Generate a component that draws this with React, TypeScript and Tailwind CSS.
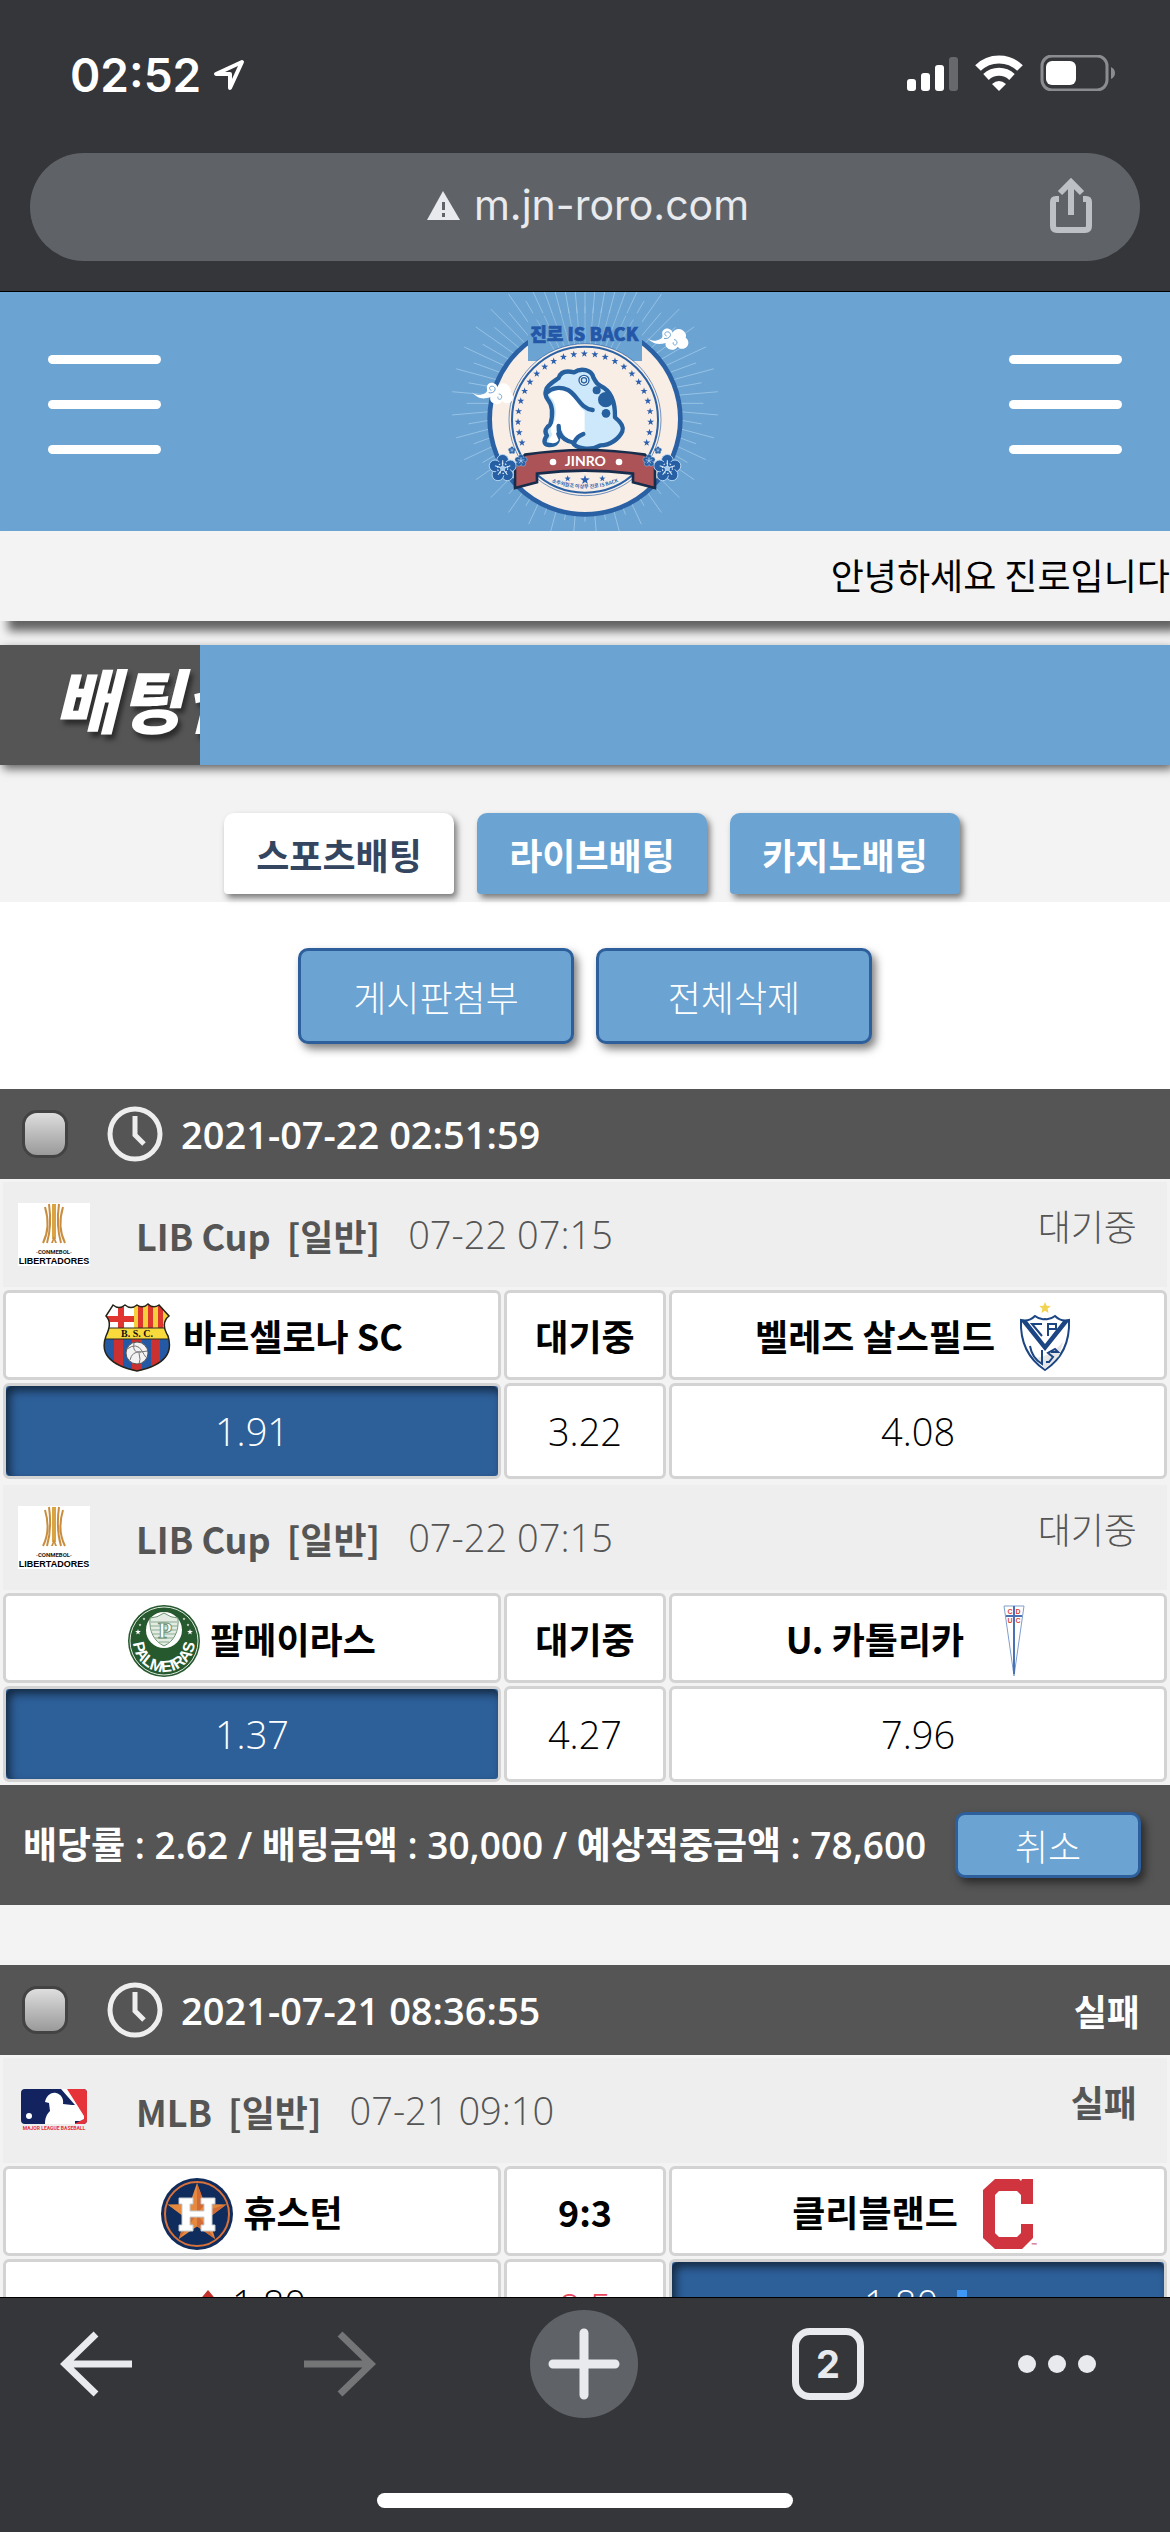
import { useState, type ReactNode } from 'react'

type TeamInfo = { name: string; logo: ReactNode }
type Odd = { value: string; selected?: boolean; trend?: 'up' | 'down'; line?: boolean }
type MatchInfo = {
  id: number
  league: string
  leagueLogo: ReactNode
  time: string
  status: string
  strong?: boolean
  home: TeamInfo
  away: TeamInfo
  score: string
  odds: Odd[]
}

function starPoints(cx: number, cy: number, r: number, inner = 0.4) {
  return Array.from({ length: 10 }, (_, i) => {
    const a = (Math.PI / 5) * i - Math.PI / 2
    const d = i % 2 ? r * inner : r
    return `${(cx + d * Math.cos(a)).toFixed(1)},${(cy + d * Math.sin(a)).toFixed(1)}`
  }).join(' ')
}

function Flower({ x, y, r }: { x: number; y: number; r: number }) {
  const petals = [0, 1, 2, 3, 4].map((i) => {
    const a = (Math.PI * 2 * i) / 5 - Math.PI / 2
    return [x + Math.cos(a) * r * 0.6, y + Math.sin(a) * r * 0.6]
  })
  return (
    <g>
      {petals.map(([px, py], i) => (
        <circle key={i} cx={px} cy={py} r={r * 0.44} fill="#275fa5" stroke="#b9d9f2" strokeWidth={r * 0.07} />
      ))}
      <circle cx={x} cy={y} r={r * 0.55} fill="#275fa5" />
      {petals.map(([px, py], i) => (
        <path key={i} d={`M${x} ${y}L${px} ${py}`} stroke="#dcecf8" strokeWidth={r * 0.08} />
      ))}
      <circle cx={x} cy={y} r={r * 0.38} fill="none" stroke="#dcecf8" strokeWidth={r * 0.08} strokeDasharray={`${r * 0.12} ${r * 0.12}`} />
      <circle cx={x} cy={y} r={r * 0.2} fill="#a9cdeb" />
    </g>
  )
}

function Cloud({ x, y }: { x: number; y: number }) {
  return (
    <g transform={`translate(${x} ${y})`}>
      <path
        d="M0 31c12 11 26 10 39 3 6-3 7-8 6-13C42 7 54 0 64 3c7 2 11 7 12 12 6-12 20-14 30-7 9 6 12 15 9 22 10 7 11 21 2 29-10 8-22 4-26-2-5 10-19 12-28 6-7-4-10-10-8-17-13 4-30 5-39-2-8-5-13-9-16-13z"
        fill="#fff"
      />
      <path d="M58 25c-6-1-8-10-1-12s14 3 12 11c-2 7-11 10-19 8M78 44c-3 6 5 11 9 6s2-14-7-14" fill="none" stroke="#6ba3d2" strokeWidth="3" />
    </g>
  )
}

function JinroLogo() {
  const rays = Array.from({ length: 72 }, (_, i) => (Math.PI * 2 * i) / 72)
  const stars = Array.from({ length: 25 }, (_, i) => ((-200 + i * (220 / 24)) * Math.PI) / 180)
  return (
    <svg viewBox="-15 6 900 717" className="h-[239px] w-[300px]" role="img" aria-label="진로 IS BACK">
      {rays.map((a, i) => {
        const d = i % 2 ? 400 : 355
        return (
          <path
            key={i}
            d={`M${435 + Math.cos(a) * 150} ${340 + Math.sin(a) * 150}L${435 + Math.cos(a) * d} ${340 + Math.sin(a) * d}`}
            stroke="#a5cdeb"
            strokeWidth="3"
            opacity="0.75"
          />
        )
      })}
      <circle cx="435" cy="387" r="286" fill="#f8eee6" stroke="#2a60a4" strokeWidth="14" />
      <path d="M264 213V70h342v143z" fill="#6ba3d2" />
      {rays.slice(48, 61).map((a) => (
        <path
          key={a}
          d={`M${435 + Math.cos(a) * 150} ${340 + Math.sin(a) * 150}L${435 + Math.cos(a) * 290} ${340 + Math.sin(a) * 290}`}
          stroke="#a5cdeb"
          strokeWidth="3"
          opacity="0.6"
        />
      ))}
      <circle cx="435" cy="389" r="228" fill="#f8eee6" stroke="#2a60a4" strokeWidth="2" />
      <circle cx="435" cy="389" r="219" fill="none" stroke="#2a60a4" strokeWidth="6" />
      <text
        x="433"
        y="152"
        textAnchor="middle"
        className="font-['Noto_Sans_CJK_KR',sans-serif] text-[54px] font-black"
        fill="#2457a8"
        stroke="#2457a8"
        strokeWidth="2"
      >
        진로 IS BACK
      </text>
      {stars.map((a) => (
        <polygon key={a} points={starPoints(433 + Math.cos(a) * 199, 390 + Math.sin(a) * 199, 11)} fill="#2c5fae" />
      ))}
      <g stroke="#27609f" strokeWidth="13" strokeLinejoin="round" strokeLinecap="round">
        <path
          d="M318 300c2-14 24-26 38-36 6-20 26-22 46-17 22-14 52-8 58 15 7 12 8 20 22 26 30 14 44 44 43 94 20 16 28 28 22 42-10 22-36 42-66 42-30 18-74 10-84-10-18-2-30-10-38-28l-6 6c6 20-6 32-26 31-18-1-16-16-6-28-10-14-2-26 10-33 10-36 4-62-8-76-6-8-8-18-5-28z"
          fill="#cde8fa"
        />
        <path
          d="M328 312c16-14 36-16 56-6 26 18 30 44 50 58v60c-14 6-24 14-32 28-18-4-30-14-36-32l-16-12c-6 20 0 28 6 42-8 14-28 10-30 4 0-8 8-12 11-22-8-10-6-22 4-32 12-30 6-60-4-72-6-6-9-10-9-16z"
          fill="#fff"
          stroke="none"
        />
        <path d="M320 308c16-16 42-18 64-8 28 14 34 54 74 60M360 432c-4-10-4-14-4-24M402 458c8-16 14-20 28-26" fill="none" />
      </g>
      <circle cx="432" cy="271" r="15" fill="#fff" stroke="#27609f" strokeWidth="4" />
      <circle cx="432" cy="271" r="8" fill="#cde8fa" stroke="#27609f" strokeWidth="4" />
      <circle cx="497" cy="329" r="23" fill="#27609f" />
      <circle cx="470" cy="301" r="12" fill="#27609f" />
      <circle cx="498" cy="370" r="13" fill="#27609f" />
      <Cloud x={622} y={113} />
      <Cloud x={96} y={276} />
      <path d="M225 530l30-36q180-28 360 0l30 36v64l-66-17v-26q-145-18-288 0v26l-66 17z" fill="#ab5356" stroke="#182c4c" strokeWidth="8" />
      <circle cx="339" cy="516" r="10" fill="#fff" />
      <circle cx="537" cy="516" r="10" fill="#fff" />
      <text x="436" y="528" textAnchor="middle" className="font-['Lato',sans-serif] text-[42px] font-bold" fill="#fff">
        JINRO
      </text>
      <polygon points={starPoints(383, 566, 10)} fill="#2c5fae" />
      <polygon points={starPoints(435, 570, 15)} fill="#2c5fae" />
      <polygon points={starPoints(487, 566, 10)} fill="#2c5fae" />
      <path id="motto" d="M325 572q108 46 220 0" fill="none" />
      <text className="font-['Noto_Sans_CJK_KR',sans-serif] text-[15px] font-bold" fill="#2c5fae">
        <textPath href="#motto" startOffset="50%" textAnchor="middle">
          소주의원조 이상무 진로 IS BACK
        </textPath>
      </text>
      <Flower x={188} y={535} r={40} />
      <Flower x={682} y={535} r={40} />
      <Flower x={243} y={512} r={18} />
      <Flower x={627} y={512} r={18} />
      <Flower x={216} y={481} r={11} />
      <Flower x={654} y={481} r={11} />
    </svg>
  )
}

function LibertadoresLogo() {
  return (
    <svg viewBox="0 0 72 63" className="h-[63px] w-[72px]" role="img" aria-label="CONMEBOL Libertadores">
      <path d="M0 0h72v63H0z" fill="#fff" />
      <path d="M34 1h4v35h-4z" fill="#d9a441" />
      <path d="M31 1q3 22-2 39M41 1q-3 22 2 39M27 4q6 20-2 36M45 4q-6 20 2 36" fill="none" stroke="#c98d40" strokeWidth="2" />
      <path d="M36 33l-3 7h2l1-3 1 3h2z" fill="#c98d40" />
      <text x="36" y="51" textAnchor="middle" className="font-['Roboto',sans-serif] text-[6px] font-bold" fill="#222">
        ·CONMEBOL·
      </text>
      <text x="36" y="61" textAnchor="middle" className="font-['Liberation_Sans',sans-serif] text-[9px] font-bold" fill="#000">
        LIBERTADORES
      </text>
    </svg>
  )
}

function MlbLogo() {
  return (
    <svg viewBox="0 0 72 48" className="h-12 w-[72px]" role="img" aria-label="Major League Baseball">
      <rect x="3" y="2" width="66" height="35" rx="4" fill="#12235f" />
      <path d="M48 2h17q4 0 4 4v27q0 4-4 4h-9l10-5z" fill="#e6333a" />
      <path d="M43 2h6l17 27v3l-4 2h-5v3H27c0-5 1-9 5-13l-1-8-4-1c1-5 5-10 11-9 5 1 8 6 7 11l9 1h3z" fill="#fff" />
      <circle cx="11" cy="29" r="3" fill="#fff" />
      <text x="36" y="43" textAnchor="middle" className="font-['Roboto',sans-serif] text-[5px] font-bold" fill="#e6333a">
        MAJOR LEAGUE BASEBALL
      </text>
    </svg>
  )
}

function BarcelonaCrest() {
  return (
    <svg viewBox="0 0 72 72" className="size-[72px]" role="img" aria-label="바르셀로나 SC">
      <defs>
        <clipPath id="bsc">
          <path d="M12 3q6 5 12 0q6 5 12 0h0q6 4 11-1q5 5 11 1l10 11c-5 4-7 10-1 20 5 16-2 29-31 35C7 63-1 50 5 34c5-10 4-16 0-20z" />
        </clipPath>
      </defs>
      <g clipPath="url(#bsc)">
        <path d="M0 0h36v26H0z" fill="#fff" />
        <path d="M0 14h36v6H0zM17 0h6v26h-6z" fill="#e1362f" />
        <path d="M33 0h39v26H33z" fill="#f6cf3d" />
        <path d="M37 0h5v26h-5zM47 0h5v26h-5zM57 0h5v26h-5zM67 0h5v26h-5z" fill="#dc362d" />
        <path d="M0 37h72v35H0z" fill="#2459a5" />
        <path d="M13 37h9v35h-9zM31 37h10v35H31zM50 37h9v35h-9z" fill="#cb3130" />
        <path d="M0 26h72v11H0z" fill="#f8da3c" stroke="#2a2a22" />
      </g>
      <path
        d="M12 3q6 5 12 0q6 5 12 0h0q6 4 11-1q5 5 11 1l10 11c-5 4-7 10-1 20 5 16-2 29-31 35C7 63-1 50 5 34c5-10 4-16 0-20z"
        fill="none"
        stroke="#252419"
        strokeWidth="1.5"
      />
      <text x="36" y="35" textAnchor="middle" className="font-['Liberation_Serif',serif] text-[10px] font-bold" fill="#111">
        B. S. C.
      </text>
      <circle cx="36" cy="51" r="11" fill="#f3f3f3" stroke="#555" />
      <path d="M26 47q10-7 15 2t5 6M33 41q-2 10 6 9l8-1M29 58q2-9 11-8M38 62q2-4 0-11" fill="none" stroke="#777" />
    </svg>
  )
}

function VelezCrest() {
  return (
    <svg viewBox="0 0 72 72" className="size-[72px]" role="img" aria-label="벨레즈 살스필드">
      <polygon points={starPoints(36, 6, 6, 0.45)} fill="#f3d352" />
      <path d="M12 18q8 2 14-4q5 4 10 3q5 1 10-3q6 6 14 4c1 22-6 38-24 50C18 56 11 40 12 18z" fill="#fff" stroke="#1c4583" strokeWidth="2" />
      <path d="M28 56q14-2 26-16l-4 14-14 13z" fill="#e5e6e8" />
      <path d="M12 19h6l18 23 18-23h6L36 49z" fill="#1c4583" />
      <path d="M33 22H23l10 12M39 34V22h8v5h-7M21 44q2 12 12 18V48M42 50h7l-3-3-7 4 5 4-4 5h-3" fill="none" stroke="#1c4583" strokeWidth="2" />
    </svg>
  )
}

function PalmeirasCrest() {
  return (
    <svg viewBox="0 0 72 72" className="size-[72px]" role="img" aria-label="팔메이라스">
      <circle cx="36" cy="36" r="36" fill="#27592f" />
      <circle cx="36" cy="36" r="34" fill="none" stroke="#dce8de" />
      <circle cx="36" cy="25" r="18" fill="#fff" />
      <path d="M22 13q7 0 14-5 7 5 14 5c1 14-4 23-14 28-10-5-15-14-14-28z" fill="#e3ece3" stroke="#6c9272" />
      <path d="M23 17h26M23 21h26M24 25h24M25 29h22M27 33h18M31 37h10" stroke="#8cab90" />
      <text x="37" y="33" textAnchor="middle" className="font-['Liberation_Serif',serif] text-[23px]" fill="#fff" stroke="#6c9272">
        P
      </text>
      {[
        [10, 27, 3],
        [12, 20, 1.5],
        [16, 14, 1.5],
        [62, 27, 3],
        [60, 20, 1.5],
        [56, 14, 1.5],
      ].map(([x, y, r]) => (
        <polygon key={`${x}-${y}`} points={starPoints(x, y, r)} fill="#fff" />
      ))}
      <path id="palmeiras" d="M5 36a31 31 0 0 0 62 0" fill="none" />
      <text className="font-['Liberation_Sans',sans-serif] text-[16px] font-bold" fill="#fff">
        <textPath href="#palmeiras" startOffset="50%" textAnchor="middle">
          PALMEIRAS
        </textPath>
      </text>
    </svg>
  )
}

function CatolicaCrest() {
  return (
    <svg viewBox="0 0 72 72" className="size-[72px]" role="img" aria-label="U. 카톨리카">
      <path d="M26 1h20L36 71z" fill="#fff" stroke="#7f9fcd" />
      <path d="M36 1v68M28 11h16" stroke="#4a71b4" strokeWidth="2" />
      <g className="font-['Liberation_Sans',sans-serif] text-[7px] font-bold" fill="#d9433f" textAnchor="middle">
        <text x="32" y="9">C</text>
        <text x="40" y="9">D</text>
        <text x="32" y="18">U</text>
        <text x="40" y="18">C</text>
      </g>
    </svg>
  )
}

function AstrosLogo() {
  return (
    <svg viewBox="0 0 72 72" className="size-[72px]" role="img" aria-label="휴스턴">
      <circle cx="36" cy="36" r="36" fill="#0f2c5c" />
      <circle cx="36" cy="36" r="32" fill="none" stroke="#d9713a" strokeWidth="2" />
      <polygon points={starPoints(36, 36, 31)} fill="#e5893e" />
      <path d="M36 36V5l8 21zM36 36l30-10-19 14zM36 36l18 25-18-13zM36 36L18 61l6-21z" fill="#d26b35" />
      <path d="M18 20h14v6h-3v7h14v-7h-3v-6h14v6h-3v21h3v6H40v-6h3v-8H29v8h3v6H18v-6h3V26h-3z" fill="#fff" stroke="#c4cbd0" />
    </svg>
  )
}

function ClevelandLogo() {
  return (
    <svg viewBox="0 0 72 72" className="size-[72px]" role="img" aria-label="클리블랜드">
      <path d="M23 1h24l2 2 1-2h11v25H49v-9l-4-4H27l-4 4v38l4 4h18l4-4v-9h12v14L50 71H23L11 60V12z" fill="#d0343f" />
      <text x="59" y="69" className="font-['Liberation_Sans',sans-serif] text-[6px] font-bold" fill="#d0343f">
        ™
      </text>
    </svg>
  )
}

function StatusBar() {
  return (
    <div className="flex h-[153px] items-start justify-between pr-[55px] pl-[70px]">
      <div className="flex items-center gap-3 pt-[45px]">
        <span className="font-['Inter',sans-serif] text-[46px] leading-[60px] font-semibold text-white">02:52</span>
        <svg viewBox="0 0 32 32" className="size-8" fill="none" stroke="#fff" strokeWidth="4" strokeLinejoin="round">
          <path d="M29 3L3 15h14v14z" />
        </svg>
      </div>
      <div className="flex items-center gap-[17px] pt-[55px]">
        <svg viewBox="0 0 51 36" className="h-9 w-[51px]" fill="#fff">
          <rect y="24" width="9" height="12" rx="3" />
          <rect x="14" y="18" width="9" height="18" rx="3" />
          <rect x="28" y="10" width="9" height="26" rx="3" />
          <rect x="42" y="2" width="9" height="34" rx="3" opacity="0.25" />
        </svg>
        <svg viewBox="0 0 48 36" className="h-9 w-12" fill="none" stroke="#fff" strokeWidth="8">
          <path d="M3 13a30 30 0 0 1 42 0" />
          <path d="M11 22a19 19 0 0 1 26 0" />
          <path d="M24 36l-7-7q7-6 14 0z" fill="#fff" stroke="none" />
        </svg>
        <svg viewBox="0 0 75 36" className="h-9 w-[75px]">
          <rect x="2" y="1" width="65" height="34" rx="10" fill="none" stroke="#8b8c8f" strokeWidth="3" />
          <rect x="6" y="6" width="30" height="24" rx="6" fill="#fff" />
          <path d="M71 12q4 2 4 6t-4 6z" fill="#8b8c8f" />
        </svg>
      </div>
    </div>
  )
}

function AddressBar() {
  return (
    <div className="mx-[30px] grid h-[108px] grid-cols-[1fr_auto_1fr] items-center rounded-full bg-[#5f6368] px-12">
      <a
        href="#top"
        className="col-start-2 flex items-center gap-3.5 pb-1 pl-1.5 font-['Inter',sans-serif] text-[41px] leading-[60px] text-[#e8eaed]"
      >
        <svg viewBox="0 0 33 29" className="h-[29px] w-[33px]">
          <path d="M16 0L33 29H0z" fill="#e8eaed" />
          <path d="M15 11h3v8h-3zM15 22h3v4h-3z" fill="#5f6368" />
        </svg>
        m.jn-roro.com
      </a>
      <button type="button" aria-label="공유" className="justify-self-end pb-1">
        <svg viewBox="0 0 42 56" className="h-14 w-[42px]" fill="none" stroke="#bdc1c6" strokeWidth="6">
          <path d="M9 22H6q-3 0-3 3v24q0 4 4 4h28q4 0 4-4V25q0-3-3-3h-3M21 38V6M10 16L21 5l11 11" />
        </svg>
      </button>
    </div>
  )
}

function MenuButton({ label }: { label: string }) {
  return (
    <button type="button" aria-label={label} className="flex w-[113px] flex-col gap-9">
      <span className="h-[9px] w-full rounded-full bg-white" />
      <span className="h-[9px] w-full rounded-full bg-white" />
      <span className="h-[9px] w-full rounded-full bg-white" />
    </button>
  )
}

const TABS = ['스포츠배팅', '라이브배팅', '카지노배팅']

function BetTabs() {
  const [active, setActive] = useState(0)
  return (
    <nav className="flex justify-center gap-[23px] pt-12 pb-2 pl-3.5">
      {TABS.map((tab, i) => (
        <button
          key={tab}
          type="button"
          onClick={() => setActive(i)}
          className={`h-[81px] w-[230px] rounded-t-[10px] rounded-b-sm text-[36px] font-bold shadow-[3px_4px_6px_rgba(0,0,0,0.5)] ${
            i === active ? 'bg-white text-[#34455f]' : 'bg-[#6ba3d2] text-white'
          }`}
        >
          {tab}
        </button>
      ))}
    </nav>
  )
}

function ActionButton({ className, children }: { className: string; children: ReactNode }) {
  return (
    <button
      type="button"
      className={`rounded-[10px] border-[3px] border-[#2d5f9c] bg-[#6ba3d2] text-[36px] font-light text-white shadow-[4px_5px_8px_rgba(0,0,0,0.5)] ${className}`}
    >
      {children}
    </button>
  )
}

function SlipHeader({ time, result }: { time: string; result?: string }) {
  return (
    <header className="flex h-[90px] items-center bg-[#555] pr-[30px] pl-[22px] text-[36px] font-semibold text-white">
      <label className="flex items-center">
        <input
          type="checkbox"
          aria-label={time}
          className="h-12 w-[46px] appearance-none rounded-[15px] border-[3px] border-[#434343] bg-linear-to-b from-[#dedede] to-[#9a9a9a]"
        />
        <svg viewBox="0 0 56 56" className="ml-[39px] size-14" fill="none" stroke="#eee">
          <circle cx="28" cy="28" r="25" strokeWidth="5" />
          <path d="M28 10v19l9 9" strokeWidth="5" />
        </svg>
        <time className="ml-[18px] font-['Open_Sans',sans-serif] text-[38px]">{time}</time>
      </label>
      {result && <span className="ml-auto">{result}</span>}
    </header>
  )
}

function OddCell({ odd }: { odd: Odd }) {
  const tone = odd.selected
    ? 'bg-[#2d5f99] text-white shadow-[inset_4px_5px_9px_rgba(0,0,0,0.55)]'
    : odd.line
      ? 'bg-white text-[#e8475c]'
      : 'bg-white text-black'
  return (
    <td className={`h-24 rounded-md border-[3px] border-[#d3d3d3] p-0 text-center ${tone}`}>
      <span className={`flex items-center justify-center gap-3.5 ${odd.trend ? 'pb-2' : ''}`}>
        {odd.trend === 'up' && (
          <svg viewBox="0 0 20 26" className="h-[26px] w-5">
            <path d="M10 0l10 12h-6v14H6V12H0z" fill="#c3302c" />
          </svg>
        )}
        {odd.value}
        {odd.trend === 'down' && (
          <svg viewBox="0 0 20 26" className="h-[26px] w-5">
            <path d="M10 26l10-12h-5V0H5v14H0z" fill="#3f97f6" />
          </svg>
        )}
      </span>
    </td>
  )
}

function Match({ match }: { match: MatchInfo }) {
  const cell = 'h-[90px] rounded-md border-[3px] border-[#d3d3d3] bg-white p-0 text-[36px] font-bold text-black'
  return (
    <article className="pt-[3px]">
      <header className="mx-[3px] flex h-[105px] justify-between bg-[#eee] pr-[30px] pl-[15px] text-[36px] text-[#555]">
        <div className="flex items-center">
          {match.leagueLogo}
          <h3 className="ml-[46px] font-bold">{match.league}</h3>
          <span className="ml-4 font-bold">[일반]</span>
          <time className="ml-7 font-['Open_Sans',sans-serif] text-[38px] font-light">{match.time}</time>
        </div>
        <span className={`pt-[17px] leading-[52px] ${match.strong ? 'font-bold' : 'font-light'}`}>{match.status}</span>
      </header>
      <table className="w-full table-fixed border-separate border-spacing-[3px]">
        <thead>
          <tr>
            <th className={`w-[43%] ${cell}`}>
              <span className="flex items-center justify-center gap-2.5">
                <span className="pt-1.5">{match.home.logo}</span>
                {match.home.name}
              </span>
            </th>
            <th className={`w-[14%] ${cell}`}>{match.score}</th>
            <th className={`w-[43%] ${cell}`}>
              <span className="flex items-center justify-center gap-3.5">
                {match.away.name}
                <span className="pt-1.5">{match.away.logo}</span>
              </span>
            </th>
          </tr>
        </thead>
        <tbody>
          <tr className="font-['Open_Sans',sans-serif] text-[38px] font-light">
            {match.odds.map((odd, i) => (
              <OddCell key={i} odd={odd} />
            ))}
          </tr>
        </tbody>
      </table>
    </article>
  )
}

const PENDING: MatchInfo[] = [
  {
    id: 1,
    league: 'LIB Cup',
    leagueLogo: <LibertadoresLogo />,
    time: '07-22 07:15',
    status: '대기중',
    home: { name: '바르셀로나 SC', logo: <BarcelonaCrest /> },
    away: { name: '벨레즈 살스필드', logo: <VelezCrest /> },
    score: '대기중',
    odds: [{ value: '1.91', selected: true }, { value: '3.22' }, { value: '4.08' }],
  },
  {
    id: 2,
    league: 'LIB Cup',
    leagueLogo: <LibertadoresLogo />,
    time: '07-22 07:15',
    status: '대기중',
    home: { name: '팔메이라스', logo: <PalmeirasCrest /> },
    away: { name: 'U. 카톨리카', logo: <CatolicaCrest /> },
    score: '대기중',
    odds: [{ value: '1.37', selected: true }, { value: '4.27' }, { value: '7.96' }],
  },
]

const LOST: MatchInfo = {
  id: 3,
  league: 'MLB',
  leagueLogo: <MlbLogo />,
  time: '07-21 09:10',
  status: '실패',
  strong: true,
  home: { name: '휴스턴', logo: <AstrosLogo /> },
  away: { name: '클리블랜드', logo: <ClevelandLogo /> },
  score: '9:3',
  odds: [
    { value: '1.80', trend: 'up' },
    { value: '8.5', line: true },
    { value: '1.80', selected: true, trend: 'down' },
  ],
}

function BrowserToolbar() {
  return (
    <footer className="shrink-0 border-t border-black bg-[#35363a]">
      <div className="flex items-center justify-between pt-3 pr-[74px] pl-[42px]">
        <button type="button" aria-label="뒤로" className="flex size-[108px] items-center justify-center">
          <svg viewBox="0 0 72 66" className="h-[66px] w-[72px]" fill="none" stroke="#e8eaed" strokeWidth="7">
            <path d="M72 33H6M36 3L5 33l31 30" />
          </svg>
        </button>
        <button type="button" aria-label="앞으로" disabled className="flex size-[108px] items-center justify-center">
          <svg viewBox="0 0 72 66" className="h-[66px] w-[72px]" fill="none" stroke="#747577" strokeWidth="7">
            <path d="M0 33h66M36 3l31 30-31 30" />
          </svg>
        </button>
        <button type="button" aria-label="새 탭" className="flex size-[108px] items-center justify-center rounded-full bg-[#5f6368]">
          <svg viewBox="0 0 72 72" className="size-[72px]" stroke="#e8eaed" strokeWidth="9" strokeLinecap="round">
            <path d="M36 5v62M5 36h62" />
          </svg>
        </button>
        <button type="button" aria-label="탭 목록" className="flex size-[108px] items-center justify-center">
          <span className="flex size-[72px] items-center justify-center rounded-[18px] border-[7px] border-[#e8eaed] font-['Inter',sans-serif] text-[38px] font-bold text-[#e8eaed]">
            2
          </span>
        </button>
        <button type="button" aria-label="메뉴" className="flex h-[108px] items-center gap-3">
          <span className="size-[18px] rounded-full bg-[#e8eaed]" />
          <span className="size-[18px] rounded-full bg-[#e8eaed]" />
          <span className="size-[18px] rounded-full bg-[#e8eaed]" />
        </button>
      </div>
      <div className="mx-auto mt-[75px] mb-6 h-[15px] w-[416px] rounded-full bg-white" />
    </footer>
  )
}

export default function App() {
  return (
    <div className="flex h-screen flex-col overflow-hidden bg-[#f3f3f3] font-['Noto_Sans_CJK_KR',sans-serif]">
      <div className="shrink-0 border-b border-black bg-[#35363a] pb-[30px]">
        <StatusBar />
        <AddressBar />
      </div>
      <main className="min-h-0 flex-1 overflow-hidden">
        <header className="flex h-[239px] items-start justify-between bg-[#6ba3d2] px-12">
          <div className="pt-[63px]">
            <MenuButton label="메뉴" />
          </div>
          <JinroLogo />
          <div className="pt-[63px]">
            <MenuButton label="내 정보" />
          </div>
        </header>
        <div className="pb-6">
          <div className="flex h-[90px] items-center shadow-[8px_10px_9px_rgba(0,0,0,0.6)]">
            <p className="w-full overflow-hidden bg-[#f3f3f3] pb-1 pl-[71%] text-[36px] leading-[86px] whitespace-nowrap text-black">
              안녕하세요 진로입니다.
            </p>
          </div>
        </div>
        <div className="flex h-[120px] bg-[#6ba3d2] shadow-[3px_4px_9px_rgba(0,0,0,0.6)]">
          <h1 className="w-[200px] overflow-hidden bg-[#555] pl-[54px] text-[70px] leading-[106px] font-black whitespace-nowrap text-white italic text-shadow-[3px_5px_5px_rgba(0,0,0,0.5)]">
            배팅결과
          </h1>
        </div>
        <BetTabs />
        <div className="flex justify-center gap-[22px] bg-white pt-[46px] pb-[45px]">
          <ActionButton className="h-24 w-[276px]">게시판첨부</ActionButton>
          <ActionButton className="h-24 w-[276px]">전체삭제</ActionButton>
        </div>
        <section>
          <SlipHeader time="2021-07-22 02:51:59" />
          {PENDING.map((match) => (
            <Match key={match.id} match={match} />
          ))}
          <div className="flex h-[120px] items-center justify-between bg-[#555] pr-[29px] pl-[23px]">
            <p className="font-['Open_Sans','Noto_Sans_CJK_KR',sans-serif] text-[37px] font-semibold whitespace-nowrap text-white">
              배당률 : 2.62 / 배팅금액 : 30,000 / 예상적중금액 : 78,600
            </p>
            <ActionButton className="h-[66px] w-[186px]">취소</ActionButton>
          </div>
        </section>
        <section className="pt-[60px]">
          <SlipHeader time="2021-07-21 08:36:55" result="실패" />
          <Match match={LOST} />
        </section>
      </main>
      <BrowserToolbar />
    </div>
  )
}
